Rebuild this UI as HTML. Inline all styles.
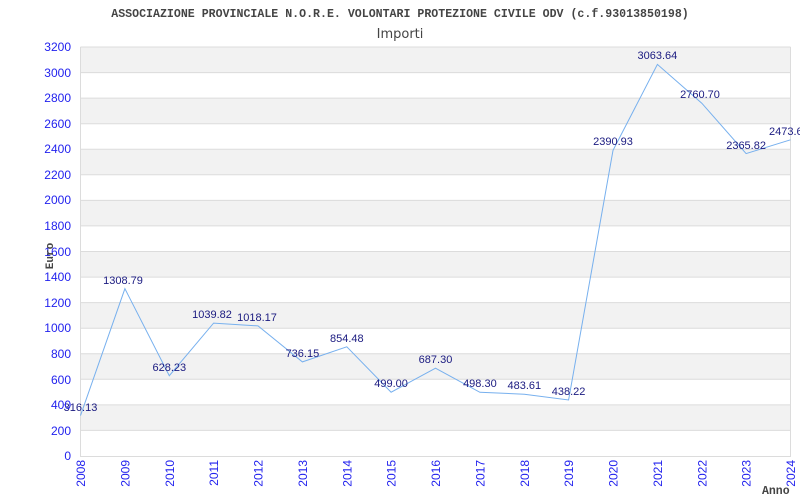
<!DOCTYPE html>
<html><head><style>body{margin:0;background:#fff}svg{display:block}</style></head><body>
<svg width="800" height="500" xmlns="http://www.w3.org/2000/svg">
<rect width="800" height="500" fill="#fff"/>
<g fill="#f2f2f2">
<rect x="80.5" y="47" width="710" height="25.56"/>
<rect x="80.5" y="98.1" width="710" height="25.56"/>
<rect x="80.5" y="149.2" width="710" height="25.56"/>
<rect x="80.5" y="200.4" width="710" height="25.56"/>
<rect x="80.5" y="251.5" width="710" height="25.56"/>
<rect x="80.5" y="302.6" width="710" height="25.56"/>
<rect x="80.5" y="353.8" width="710" height="25.56"/>
<rect x="80.5" y="404.9" width="710" height="25.56"/>
</g>
<g stroke="#dcdcdc" stroke-width="1">
<path d="M80.5 47H790.5M80.5 72.6H790.5M80.5 98.1H790.5M80.5 123.7H790.5M80.5 149.2H790.5M80.5 174.8H790.5M80.5 200.4H790.5M80.5 225.9H790.5M80.5 251.5H790.5M80.5 277.1H790.5M80.5 302.6H790.5M80.5 328.2H790.5M80.5 353.8H790.5M80.5 379.3H790.5M80.5 404.9H790.5M80.5 430.4H790.5"/>
<path d="M80.5 47V456.5H790.5V47" fill="none"/>
</g>
<polyline fill="none" stroke="#77b0ee" stroke-width="1" points="80.5,415.6 124.9,288.7 169.3,375.7 213.6,323.1 258,325.9 302.4,361.9 346.8,346.8 391.1,392.2 435.5,368.2 479.9,392.3 524.3,394.2 568.6,400 613,150.4 657.4,64.4 701.8,103.2 746.1,153.6 790.5,139.8"/>
<g font-family="Liberation Sans, sans-serif" font-size="11" fill="#1a1a80" text-anchor="middle">
<text x="80.5" y="411">316.13</text>
<text x="123" y="284">1308.79</text>
<text x="169.3" y="371">628.23</text>
<text x="212" y="318">1039.82</text>
<text x="257" y="321">1018.17</text>
<text x="302.4" y="357">736.15</text>
<text x="346.8" y="342">854.48</text>
<text x="391.1" y="387">499.00</text>
<text x="435.5" y="363">687.30</text>
<text x="479.9" y="387">498.30</text>
<text x="524.3" y="389">483.61</text>
<text x="568.6" y="395">438.22</text>
<text x="613" y="145">2390.93</text>
<text x="657.4" y="59">3063.64</text>
<text x="700" y="98">2760.70</text>
<text x="746.1" y="149">2365.82</text>
<text x="769" y="135" text-anchor="start">2473.6</text>
</g>
<g font-family="Liberation Sans, sans-serif" font-size="12" fill="#2222ee" text-anchor="end">
<text x="71" y="51">3200</text><text x="71" y="77">3000</text><text x="71" y="102">2800</text><text x="71" y="128">2600</text><text x="71" y="153">2400</text><text x="71" y="179">2200</text><text x="71" y="204">2000</text><text x="71" y="230">1800</text><text x="71" y="256">1600</text><text x="71" y="281">1400</text><text x="71" y="307">1200</text><text x="71" y="332">1000</text><text x="71" y="358">800</text><text x="71" y="384">600</text><text x="71" y="409">400</text><text x="71" y="435">200</text><text x="71" y="460">0</text>
</g>
<g font-family="Liberation Sans, sans-serif" font-size="12" fill="#2222ee" text-anchor="end">
<text transform="translate(85,460) rotate(-90)">2008</text>
<text transform="translate(129.4,460) rotate(-90)">2009</text>
<text transform="translate(173.8,460) rotate(-90)">2010</text>
<text transform="translate(218.1,460) rotate(-90)">2011</text>
<text transform="translate(262.5,460) rotate(-90)">2012</text>
<text transform="translate(306.9,460) rotate(-90)">2013</text>
<text transform="translate(351.3,460) rotate(-90)">2014</text>
<text transform="translate(395.6,460) rotate(-90)">2015</text>
<text transform="translate(440,460) rotate(-90)">2016</text>
<text transform="translate(484.4,460) rotate(-90)">2017</text>
<text transform="translate(528.8,460) rotate(-90)">2018</text>
<text transform="translate(573.1,460) rotate(-90)">2019</text>
<text transform="translate(617.5,460) rotate(-90)">2020</text>
<text transform="translate(661.9,460) rotate(-90)">2021</text>
<text transform="translate(706.3,460) rotate(-90)">2022</text>
<text transform="translate(750.6,460) rotate(-90)">2023</text>
<text transform="translate(795,460) rotate(-90)">2024</text>
</g>
<text x="400" y="17" text-anchor="middle" font-family="Liberation Mono, monospace" font-size="11.6" font-weight="bold" fill="#444">ASSOCIAZIONE PROVINCIALE N.O.R.E. VOLONTARI PROTEZIONE CIVILE ODV (c.f.93013850198)</text>
<text x="400" y="38" text-anchor="middle" font-family="DejaVu Sans, sans-serif" font-size="13" fill="#444">Importi</text>
<text transform="translate(53,256) rotate(-90)" text-anchor="middle" font-family="Liberation Mono, monospace" font-size="11" font-weight="bold" fill="#444">Euro</text>
<text x="762" y="494" font-family="Liberation Mono, monospace" font-size="11.5" font-weight="bold" fill="#444">Anno</text>
</svg>
</body></html>
